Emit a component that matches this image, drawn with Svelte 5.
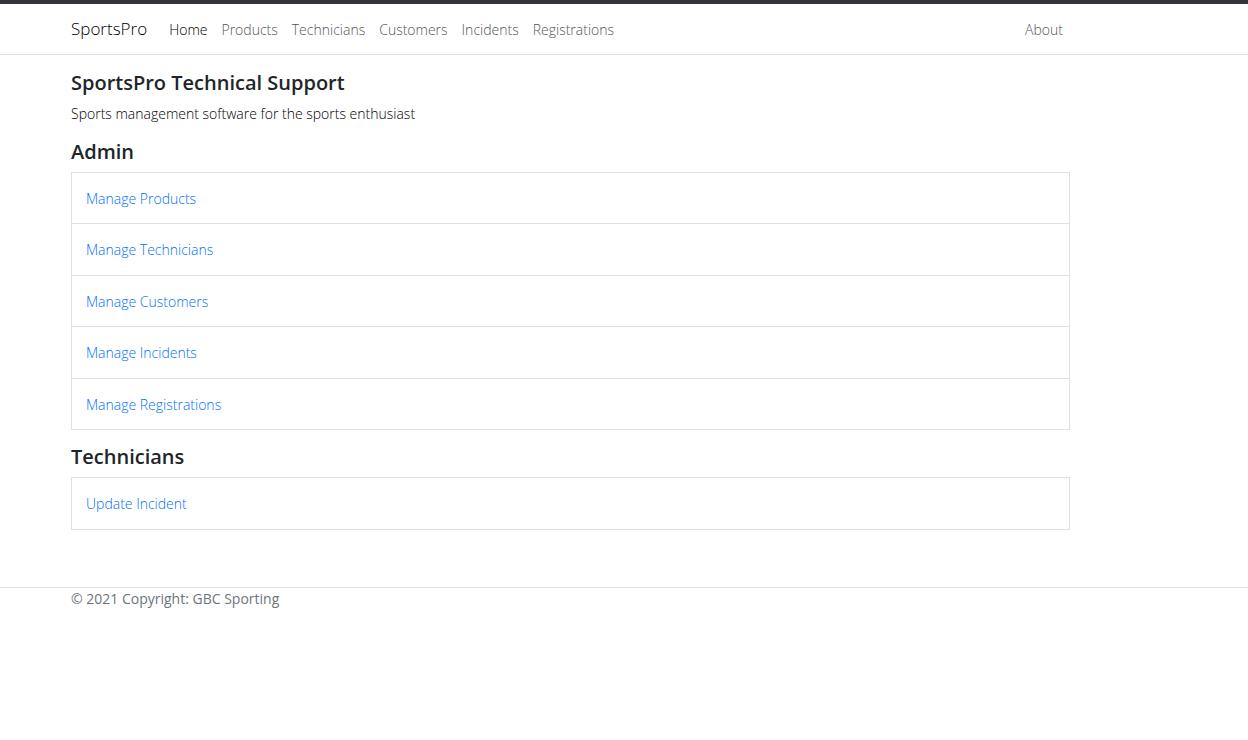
<script>
  const nav = ['Home', 'Products', 'Technicians', 'Customers', 'Incidents', 'Registrations'];
  const groups = [
    { title: 'Admin', links: ['Manage Products', 'Manage Technicians', 'Manage Customers', 'Manage Incidents', 'Manage Registrations'] },
    { title: 'Technicians', links: ['Update Incident'] }
  ];
</script>

<header>
  <nav class="container">
    <a class="brand" href="#home">SportsPro</a>
    <ul>
      {#each nav as item, i}
        <li><a class:active={i === 0} href="#{item.toLowerCase()}">{item}</a></li>
      {/each}
    </ul>
    <a class="about" href="#about">About</a>
  </nav>
</header>

<main class="container">
  <h1>SportsPro Technical Support</h1>
  <p>Sports management software for the sports enthusiast</p>
  {#each groups as group}
    <section>
      <h2>{group.title}</h2>
      <ul class="list">
        {#each group.links as link}
          <li><a href="#{link.toLowerCase().replace(' ', '-')}">{link}</a></li>
        {/each}
      </ul>
    </section>
  {/each}
</main>

<footer>
  <div class="container">© 2021 Copyright: GBC Sporting</div>
</footer>

<style>
  :global(body) {
    margin: 0;
    background: #fff;
    color: #212529;
    font: 14px/21px "Segoe UI", "Open Sans", "Noto Sans", sans-serif;
  }
  .container {
    box-sizing: border-box;
    width: 100%;
    max-width: 1070px;
    padding-left: 71px;
  }
  a { color: #0070ff; text-decoration: none; }
  ul { margin: 0; padding: 0; list-style: none; }
  header {
    border-top: 4px solid #35343a;
    border-bottom: 1px solid #dee2e6;
  }
  nav { display: flex; align-items: center; font-weight: 300; }
  nav ul { display: flex; gap: 14px; flex: 1; margin-left: 22px; }
  nav a { color: #555; }
  nav .brand { padding: 12px 0; color: #000; font-size: 17px; line-height: 26px; }
  nav .active { color: #000; }
  .about { padding-right: 7px; }
  h1, h2 { margin: 0; font-size: 20px; line-height: 26px; font-weight: 600; }
  h1 { margin-top: 15px; }
  p { margin: 7px 0 15px; color: #000; font-weight: 300; }
  section { margin-bottom: 14px; }
  .list { margin-top: 7px; border: 1px solid #dee0e3; font-weight: 300; }
  .list li { padding: 15px 14px; }
  .list li:nth-child(odd):not(:only-child) { padding-bottom: 14px; }
  .list li + li { border-top: 1px solid #dee0e3; }
  footer { margin-top: 57px; border-top: 1px solid #dee0e3; color: #6c757d; }
</style>
